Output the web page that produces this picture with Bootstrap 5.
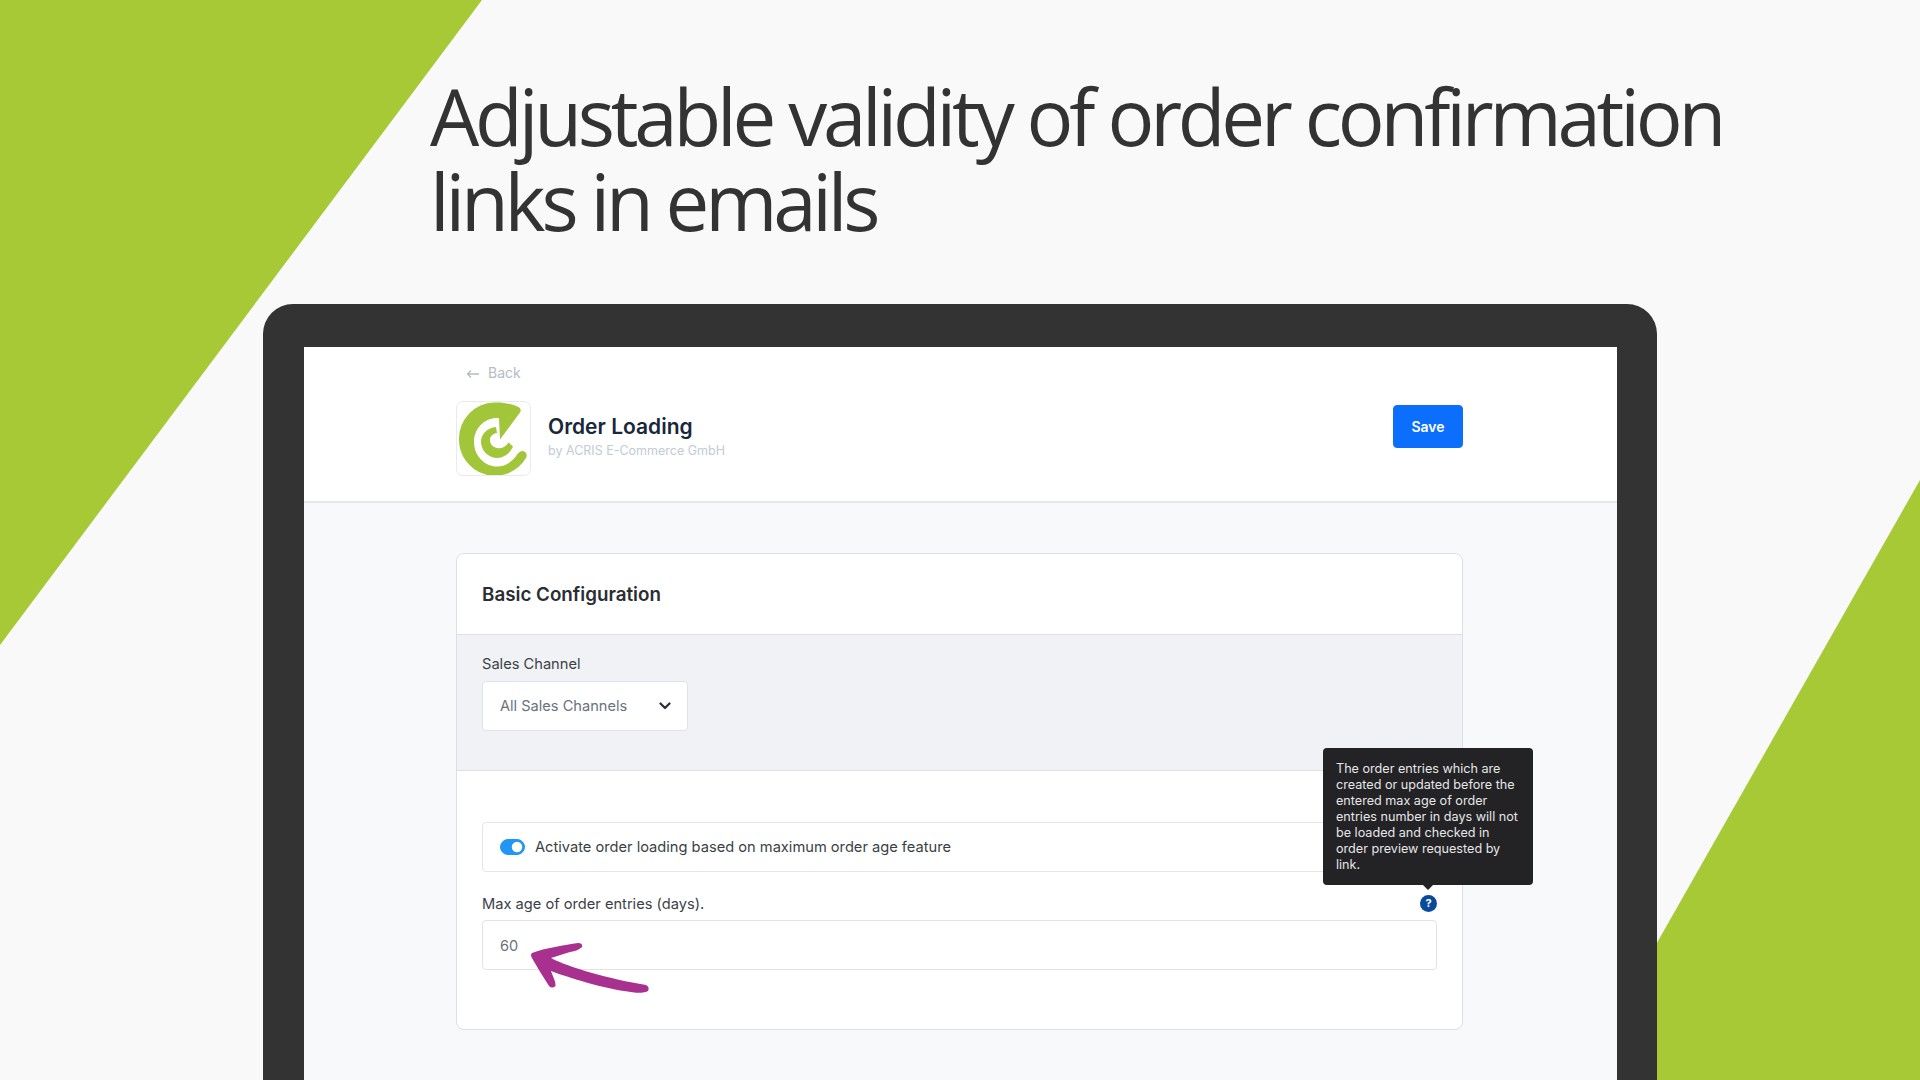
<!DOCTYPE html>
<html lang="en">
<head>
<meta charset="utf-8">
<title>Order Loading</title>
<link href="https://cdn.jsdelivr.net/npm/bootstrap@5.3.0/dist/css/bootstrap.min.css" rel="stylesheet">
<style>
html,body{margin:0;height:1080px;overflow:hidden;background:#f9f9f9;}
body{font-family:Inter,"Liberation Sans",sans-serif;}
.stage{position:relative;width:1920px;height:1080px;overflow:hidden;background:#f9f9f9;}
.bg-shapes{position:absolute;left:0;top:0;}
.headline{position:relative;margin:0;padding:74px 0 0 430px;font-family:"Open Sans",sans-serif;font-weight:400;font-size:78px;line-height:85px;letter-spacing:-4.2px;color:#333;height:304px;}
.device{position:relative;margin-left:263px;width:1394px;height:776px;background:#333;border-radius:30px 30px 0 0;padding:43px 40px 0 41px;}
.screen{height:733px;background:#f8f9fb;}
.app-head{height:156px;background:#fff;border-bottom:2px solid #e6e8eb;}
.app-wrap{width:1007px;margin:0 0 0 152px;}
.back-link{height:54px;padding:16px 0 0 10px;color:#b4bbc4;font-size:14px;line-height:20px;}
.back-link svg{margin-right:8px;vertical-align:-1px;}
.logo-box{width:75px;height:75px;border:1px solid #e8eaec;border-radius:7px;background:#fff;flex:none;}
.app-text{margin-top:-5px;margin-left:17px;}
.app-title{font-size:21px;font-weight:600;line-height:26px;color:#18283a;margin:0;}
.app-sub{font-size:12.5px;line-height:16px;color:#c3cad1;margin-top:3px;}
.save-btn{width:70px;height:43px;padding:0;font-size:14px;font-weight:600;border-radius:4px;margin-bottom:24px;background:#0b6efd;}
.conf-card{margin-top:50px;height:477px;border:1px solid #dcdfe3;border-radius:8px;background:#fff;overflow:visible;position:relative;}
.conf-head{height:81px;background:#fff;border-bottom:1px solid #dcdfe3;padding:0 25px;font-size:18.8px;font-weight:600;color:#2a2e33;line-height:81px;border-radius:8px 8px 0 0;}
.conf-filter{height:136px;background:#f0f2f5;border-bottom:1px solid #dcdfe3;padding:19px 25px 0;}
.conf-body{padding:51px 25px 0;}
.field-label{font-size:14.65px;line-height:20px;color:#3c4148;margin:0 0 7px;display:block;}
.channel-select{width:206px;height:50px;font-size:14.6px;color:#6a727c;border:1px solid #e0e3e7;border-radius:4px;padding:1px 17px 0;background-image:url("data:image/svg+xml,%3csvg xmlns='http://www.w3.org/2000/svg' viewBox='0 0 12 8'%3e%3cpath fill='none' stroke='%232b3038' stroke-width='2.2' stroke-linecap='round' stroke-linejoin='round' d='M1.500 1.500 6 6l4.500-4.500'/%3e%3c/svg%3e");background-position:right 16px center;background-size:12px 8px;}
.toggle-row{height:50px;border:1px solid #e3e5e8;border-radius:4px;padding:0 17px;font-size:14.65px;color:#3a3f45;margin-bottom:22px;}
.toggle-row .form-check-input{width:25px;height:16px;margin:0 10px 0 0;float:none;background-color:#2196f3;border-color:#2196f3;}
.toggle-row .form-check-label{line-height:20px;}
.age-input{height:50px;margin-top:6px;font-size:14.5px;color:#6a727c;border:1px solid #e0e3e7;border-radius:4px;padding:0 17px;}
.age-input[readonly]{background:#fff;}
.help-dot{width:17px;height:17px;margin-bottom:2px;border-radius:50%;background:#0a4a9c;color:#fff;font-size:11px;font-weight:700;line-height:17px;text-align:center;}
.tip-pop{position:absolute;left:866px;top:194px;width:210px;margin:0;padding:0;font-family:Inter,"Liberation Sans",sans-serif;opacity:1 !important;}
.tip-pop .tooltip-inner{max-width:none;width:210px;height:137px;padding:13px 12px 13px 13px;background:#232326;color:#e6e6e8;text-align:left;font-size:12.62px;line-height:16px;border-radius:4px;}
.tip-pop .tooltip-arrow{position:absolute;left:99px;bottom:-6px;}
.tip-pop .tooltip-arrow::before{border-top-color:#232326;}
.hand-arrow{position:absolute;left:0;top:0;pointer-events:none;}
</style>
</head>
<body>
<div class="stage">
  <svg class="bg-shapes" width="1920" height="1080" viewBox="0 0 1920 1080" aria-hidden="true">
    <polygon points="0,0 482,0 0,645" fill="#a6c935"/>
    <polygon points="1920,480 1920,1080 1579,1080" fill="#a6c935"/>
  </svg>
  <h1 class="headline">Adjustable validity of order confirmation<br>links in emails</h1>
  <div class="device">
    <div class="screen">
      <div class="app-head">
        <div class="app-wrap">
          <div class="back-link"><svg width="14" height="10" viewBox="0 0 14 10" fill="none" stroke="#b4bbc4" stroke-width="1.4"><path d="M13 5H1.500M5 1.500 1.500 5 5 8.500"/></svg>Back</div>
          <div class="d-flex align-items-center">
            <div class="logo-box d-flex align-items-center justify-content-center">
              <svg width="73" height="73" viewBox="1 1 73 73" aria-label="ACRIS logo"><path fill="#a2c63a" d="M38 1.500C47 1 56 3 62.500 6Q66 8 64 11.500L44 38.500 43 17C29 16 18 27 18 41C18 55 29 65.500 41 65.500C50 65.500 57 60 61.500 53Q65 48.500 68.500 50.500Q72 53 70 57A36 36 0 0 1 3 37.500A36 36 0 0 1 38 1.500Z"/><path fill="#a2c63a" d="M40 26C31 27 25 33 25 41C25 50 33 57 41 57C49 57 54 51.500 57 45.500L52.500 41.500C49.500 46 45.500 48 41 47C36.500 46 34 43 34 39C34 35 37 32.500 41 32Z"/></svg>
            </div>
            <div class="flex-grow-1 app-text">
              <p class="app-title">Order Loading</p>
              <div class="app-sub">by ACRIS E-Commerce GmbH</div>
            </div>
            <button class="btn btn-primary save-btn" type="button">Save</button>
          </div>
        </div>
      </div>
      <div class="app-wrap">
        <div class="conf-card">
          <div class="conf-head">Basic Configuration</div>
          <div class="conf-filter">
            <label class="field-label">Sales Channel</label>
            <select class="form-select channel-select"><option>All Sales Channels</option></select>
          </div>
          <div class="conf-body">
            <div class="toggle-row form-check form-switch d-flex align-items-center">
              <input class="form-check-input" type="checkbox" role="switch" id="ageSwitch" checked>
              <label class="form-check-label" for="ageSwitch">Activate order loading based on maximum order age feature</label>
            </div>
            <div class="d-flex justify-content-between align-items-center">
              <label class="field-label mb-0" for="ageInput">Max age of order entries (days).</label>
              <span class="help-dot">?</span>
            </div>
            <input class="form-control age-input" id="ageInput" value="60" readonly>
          </div>
          <div class="tooltip bs-tooltip-top show tip-pop" role="tooltip">
            <div class="tooltip-arrow"></div>
            <div class="tooltip-inner">The order entries which are created or updated before the entered max age of order entries number in days will not be loaded and checked in order preview requested by link.</div>
          </div>
        </div>
      </div>
    </div>
  </div>
  <svg class="hand-arrow" width="1920" height="1080" viewBox="0 0 1920 1080" aria-hidden="true">
    <path fill="#a8308f" d="M532 953C545 948 565 945 578 943Q583 943 582 947Q578 951 570 952L551 958C570 968 610 979 646 985Q650 987 648 991Q645 993 636 992.700C610 990 575 980 551 971C553 977 556 982 555.500 986Q552 989 549 986C544 978 537 967 532 958Q530 955 532 953Z"/>
  </svg>
</div>
</body>
</html>
